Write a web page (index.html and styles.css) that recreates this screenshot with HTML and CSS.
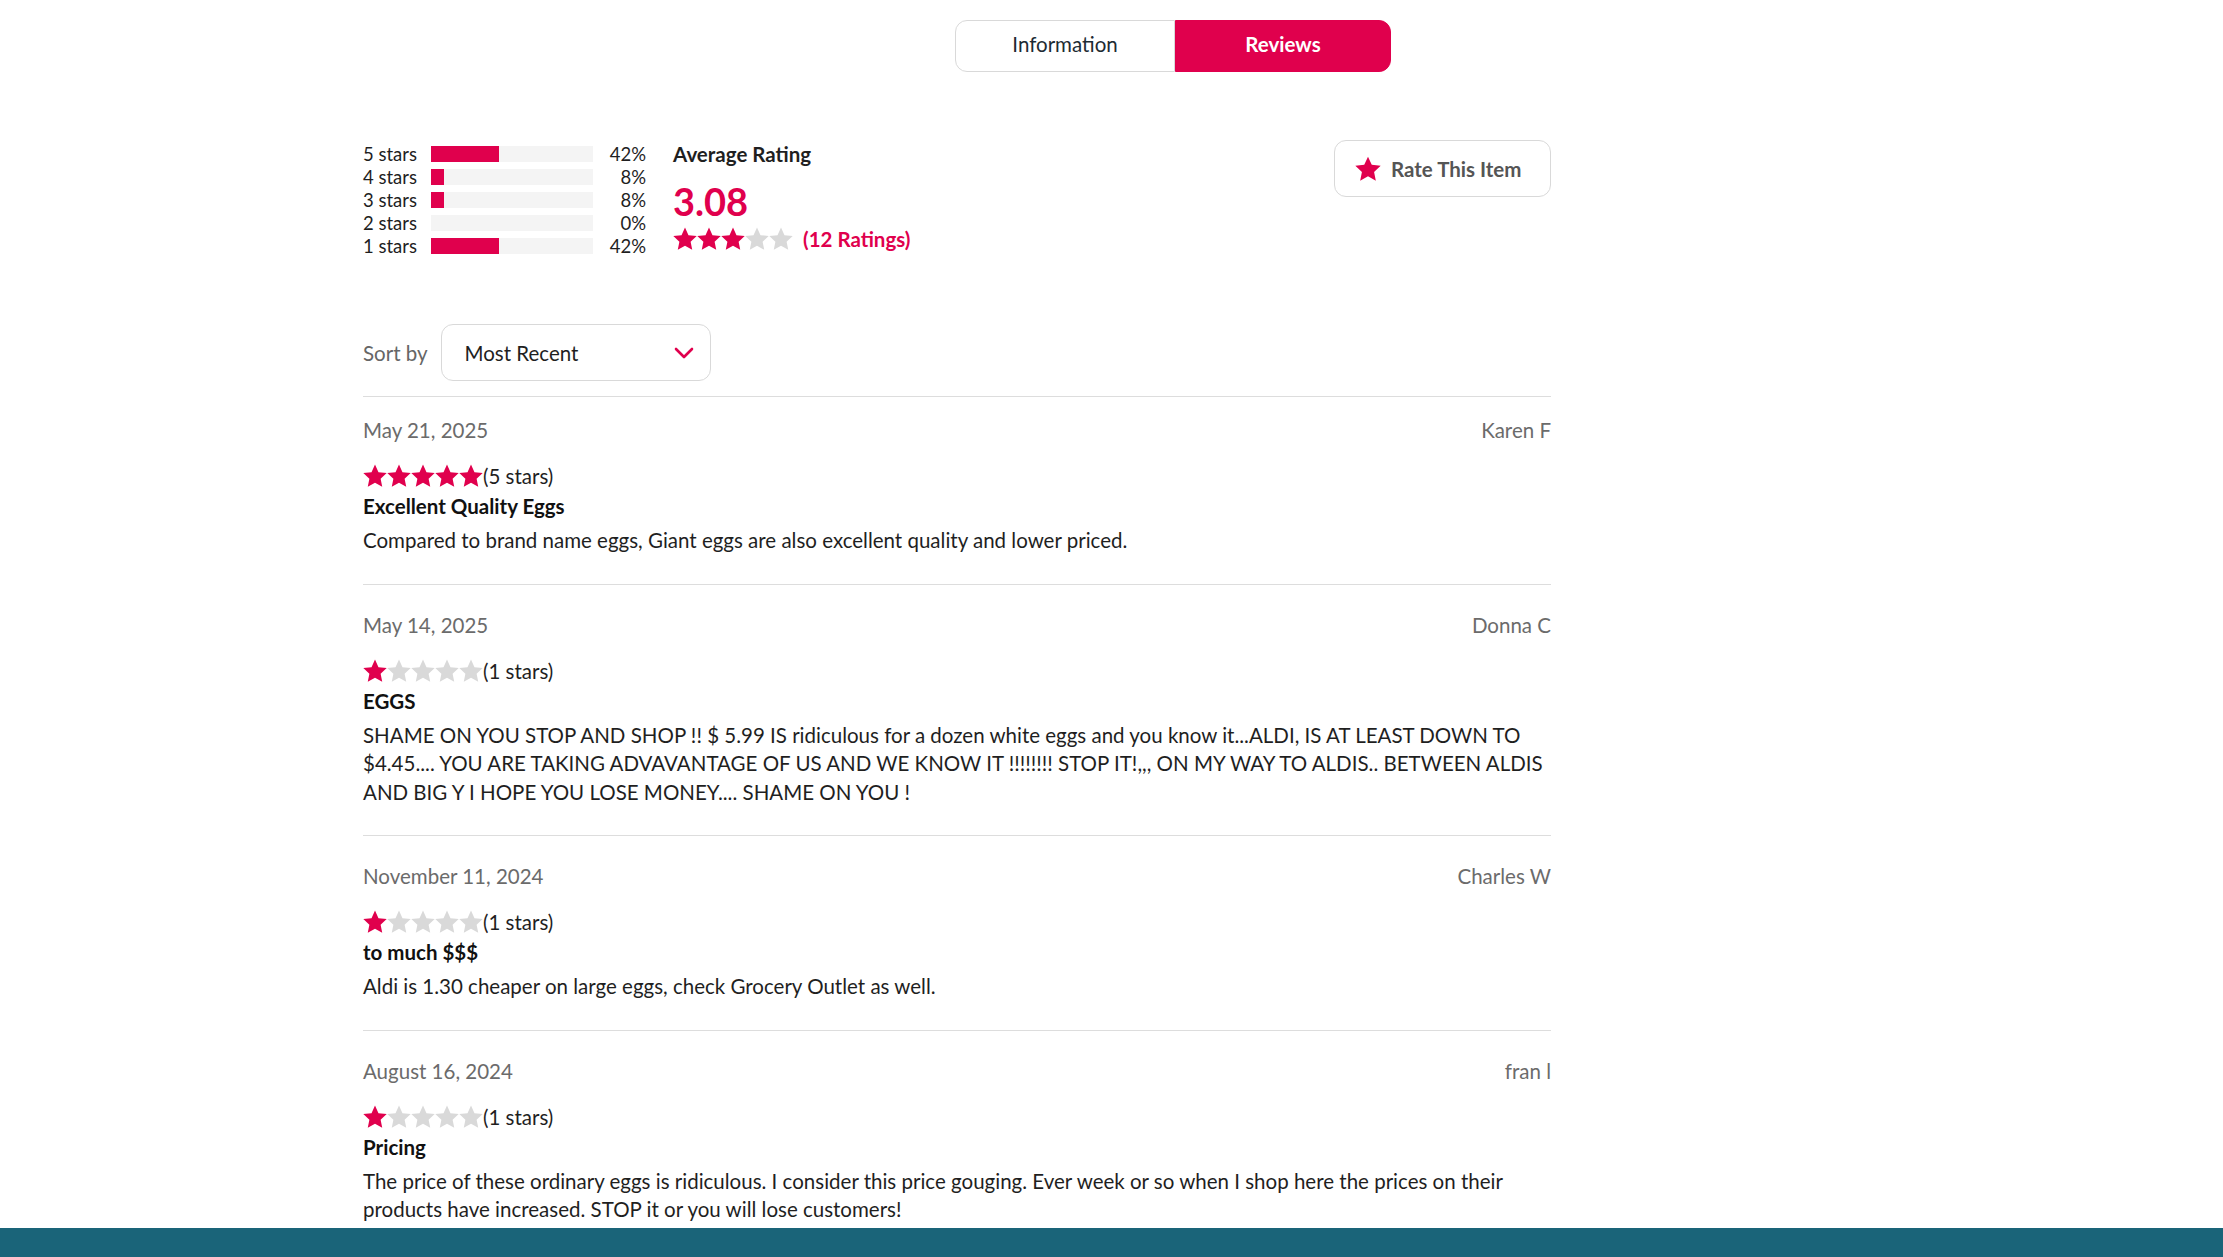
FILE: index.html
```html
<!DOCTYPE html>
<html lang="en">
<head>
<meta charset="utf-8">
<title>Reviews</title>
<link rel="stylesheet" href="styles.css">
</head>
<body>
<svg class="defs" aria-hidden="true">
  <defs>
    <polygon id="star-shape" points="12,0.6 15.47,8.13 23.7,9.1 17.61,14.72 19.23,22.85 12,18.8 4.77,22.85 6.39,14.72 0.3,9.1 8.53,8.13"/>
  </defs>
</svg>
<div class="page">
  <nav class="tabs">
    <button class="tab">Information</button>
    <button class="tab active">Reviews</button>
  </nav>

  <section class="summary">
    <div class="dist">
      <div class="dist-row"><span class="dist-label">5 stars</span><span class="bar"><span class="fill" style="width:42%"></span></span><span class="pct">42%</span></div>
      <div class="dist-row"><span class="dist-label">4 stars</span><span class="bar"><span class="fill" style="width:8%"></span></span><span class="pct">8%</span></div>
      <div class="dist-row"><span class="dist-label">3 stars</span><span class="bar"><span class="fill" style="width:8%"></span></span><span class="pct">8%</span></div>
      <div class="dist-row"><span class="dist-label">2 stars</span><span class="bar"><span class="fill" style="width:0%"></span></span><span class="pct">0%</span></div>
      <div class="dist-row"><span class="dist-label">1 stars</span><span class="bar"><span class="fill" style="width:42%"></span></span><span class="pct">42%</span></div>
    </div>
    <div class="avg">
      <div class="avg-title">Average Rating</div>
      <div class="avg-value">3.08</div>
      <div class="avg-stars">
        <span class="stars">
          <svg class="star on" viewBox="0 0 24 24"><use href="#star-shape"/></svg><svg class="star on" viewBox="0 0 24 24"><use href="#star-shape"/></svg><svg class="star on" viewBox="0 0 24 24"><use href="#star-shape"/></svg><svg class="star" viewBox="0 0 24 24"><use href="#star-shape"/></svg><svg class="star" viewBox="0 0 24 24"><use href="#star-shape"/></svg>
        </span>
        <span class="count">(12 Ratings)</span>
      </div>
    </div>
    <button class="rate-btn">
      <svg class="rate-star" viewBox="0 0 24 24"><use href="#star-shape"/></svg>
      <span>Rate This Item</span>
    </button>
  </section>

  <div class="sort">
    <span class="sort-label">Sort by</span>
    <div class="select">
      <span>Most Recent</span>
      <svg class="chevron" viewBox="0 0 20 12"><polyline points="2,2 10,10 18,2"/></svg>
    </div>
  </div>

  <ul class="reviews">
    <li class="review">
      <div class="review-meta"><span>May 21, 2025</span><span>Karen F</span></div>
      <div class="review-rating">
        <span class="stars">
          <svg class="star on" viewBox="0 0 24 24"><use href="#star-shape"/></svg><svg class="star on" viewBox="0 0 24 24"><use href="#star-shape"/></svg><svg class="star on" viewBox="0 0 24 24"><use href="#star-shape"/></svg><svg class="star on" viewBox="0 0 24 24"><use href="#star-shape"/></svg><svg class="star on" viewBox="0 0 24 24"><use href="#star-shape"/></svg>
        </span><span>(5 stars)</span>
      </div>
      <h3 class="review-title">Excellent Quality Eggs</h3>
      <p class="review-body">Compared to brand name eggs, Giant eggs are also excellent quality and lower priced.</p>
    </li>
    <li class="review">
      <div class="review-meta"><span>May 14, 2025</span><span>Donna C</span></div>
      <div class="review-rating">
        <span class="stars">
          <svg class="star on" viewBox="0 0 24 24"><use href="#star-shape"/></svg><svg class="star" viewBox="0 0 24 24"><use href="#star-shape"/></svg><svg class="star" viewBox="0 0 24 24"><use href="#star-shape"/></svg><svg class="star" viewBox="0 0 24 24"><use href="#star-shape"/></svg><svg class="star" viewBox="0 0 24 24"><use href="#star-shape"/></svg>
        </span><span>(1 stars)</span>
      </div>
      <h3 class="review-title">EGGS</h3>
      <p class="review-body">SHAME ON YOU STOP AND SHOP !! $ 5.99 IS ridiculous for a dozen white eggs and you know it...ALDI, IS AT LEAST DOWN TO $4.45.... YOU ARE TAKING ADVAVANTAGE OF US AND WE KNOW IT !!!!!!!! STOP IT!,,, ON MY WAY TO ALDIS.. BETWEEN ALDIS AND BIG Y I HOPE YOU LOSE MONEY.... SHAME ON YOU !</p>
    </li>
    <li class="review">
      <div class="review-meta"><span>November 11, 2024</span><span>Charles W</span></div>
      <div class="review-rating">
        <span class="stars">
          <svg class="star on" viewBox="0 0 24 24"><use href="#star-shape"/></svg><svg class="star" viewBox="0 0 24 24"><use href="#star-shape"/></svg><svg class="star" viewBox="0 0 24 24"><use href="#star-shape"/></svg><svg class="star" viewBox="0 0 24 24"><use href="#star-shape"/></svg><svg class="star" viewBox="0 0 24 24"><use href="#star-shape"/></svg>
        </span><span>(1 stars)</span>
      </div>
      <h3 class="review-title">to much $$$</h3>
      <p class="review-body">Aldi is 1.30 cheaper on large eggs, check Grocery Outlet as well.</p>
    </li>
    <li class="review">
      <div class="review-meta"><span>August 16, 2024</span><span>fran l</span></div>
      <div class="review-rating">
        <span class="stars">
          <svg class="star on" viewBox="0 0 24 24"><use href="#star-shape"/></svg><svg class="star" viewBox="0 0 24 24"><use href="#star-shape"/></svg><svg class="star" viewBox="0 0 24 24"><use href="#star-shape"/></svg><svg class="star" viewBox="0 0 24 24"><use href="#star-shape"/></svg><svg class="star" viewBox="0 0 24 24"><use href="#star-shape"/></svg>
        </span><span>(1 stars)</span>
      </div>
      <h3 class="review-title">Pricing</h3>
      <p class="review-body">The price of these ordinary eggs is ridiculous. I consider this price gouging. Ever week or so when I shop here the prices on their products have increased. STOP it or you will lose customers!</p>
    </li>
  </ul>
</div>
<footer class="footer-band"></footer>
</body>
</html>
```

FILE: styles.css
```css
* { box-sizing: border-box; }

body {
  margin: 0;
  background: #ffffff;
  color: #1f1f1f;
  font-family: Lato, "Open Sans", "Noto Sans", sans-serif;
  font-size: 20.5px;
}

.defs {
  position: absolute;
  width: 0;
  height: 0;
  overflow: hidden;
}

.page {
  width: 1188px;
  margin-left: 363px;
  padding-top: 20px;
  padding-bottom: 40px;
}

/* Tabs */
.tabs {
  display: flex;
  margin-left: 592px;
}

.tab {
  width: 220px;
  height: 52px;
  padding: 0 0 4px;
  font-family: inherit;
  font-size: 20.5px;
  color: #1d2b33;
  background: #ffffff;
  border: 1px solid #d9d9d9;
  border-radius: 12px 0 0 12px;
  cursor: pointer;
}

.tab.active {
  width: 216px;
  background: #e0004d;
  border-color: #e0004d;
  color: #ffffff;
  font-weight: 700;
  border-radius: 0 12px 12px 0;
}

/* Summary */
.summary {
  display: flex;
  align-items: flex-start;
  margin-top: 70px;
}

.dist {
  width: 283px;
}

.dist-row {
  display: flex;
  align-items: center;
  height: 23px;
  font-size: 18.5px;
  color: #1f1f1f;
}

.dist-label {
  width: 68px;
}

.bar {
  width: 162px;
  height: 16px;
  background: #f4f4f4;
}

.fill {
  display: block;
  height: 100%;
  background: #e0004d;
}

.pct {
  width: 53px;
  text-align: right;
}

.avg {
  margin-left: 27px;
}

.avg-title {
  font-weight: 700;
  line-height: 24px;
}

.avg-value {
  margin-top: 15px;
  font-size: 38px;
  font-weight: 700;
  line-height: 40px;
  color: #e0004d;
}

.avg-stars {
  display: flex;
  align-items: center;
  gap: 10px;
  margin-top: 6px;
}

.stars {
  display: flex;
}

.star {
  width: 24px;
  height: 24px;
  fill: #d9d9d9;
}

.star.on {
  fill: #e0004d;
}

.count {
  font-weight: 700;
  color: #e0004d;
}

.rate-btn {
  margin-left: auto;
  margin-top: -2px;
  width: 217px;
  height: 57px;
  display: flex;
  align-items: center;
  gap: 10px;
  padding: 0 0 0 20px;
  background: #ffffff;
  border: 1px solid #d9d9d9;
  border-radius: 12px;
  font-family: inherit;
  font-size: 20.5px;
  font-weight: 700;
  color: #555555;
  cursor: pointer;
}

.rate-star {
  width: 26px;
  height: 26px;
  fill: #e0004d;
}

/* Sort */
.sort {
  display: flex;
  align-items: center;
  gap: 13px;
  margin-top: 67px;
  padding-bottom: 15px;
  border-bottom: 1px solid #dddddd;
}

.sort-label {
  color: #666666;
}

.select {
  width: 270px;
  height: 57px;
  display: flex;
  align-items: center;
  justify-content: space-between;
  padding: 0 16px 0 23px;
  border: 1px solid #d9d9d9;
  border-radius: 12px;
  color: #1f1f1f;
}

.chevron {
  width: 20px;
  height: 12px;
  fill: none;
  stroke: #e0004d;
  stroke-width: 2.6;
  stroke-linecap: round;
  stroke-linejoin: round;
}

/* Reviews */
.reviews {
  list-style: none;
  margin: 0;
  padding: 0;
}

.review {
  padding: 26px 0 29px;
  border-bottom: 1px solid #dddddd;
}

.review:first-child {
  padding-top: 19px;
}

.review-meta {
  display: flex;
  justify-content: space-between;
  line-height: 28px;
  color: #6b6b6b;
}

.review-rating {
  display: flex;
  align-items: center;
  height: 24px;
  margin-top: 20px;
  color: #1f1f1f;
}

.review-title {
  margin: 4px 0 0;
  font-size: 20.5px;
  font-weight: 700;
  line-height: 28px;
  color: #111111;
}

.review-body {
  margin: 6px 0 0;
  line-height: 28.5px;
  color: #1f1f1f;
}

.footer-band {
  position: fixed;
  left: 0;
  right: 0;
  bottom: 0;
  height: 29px;
  background: #1a6479;
}
```
